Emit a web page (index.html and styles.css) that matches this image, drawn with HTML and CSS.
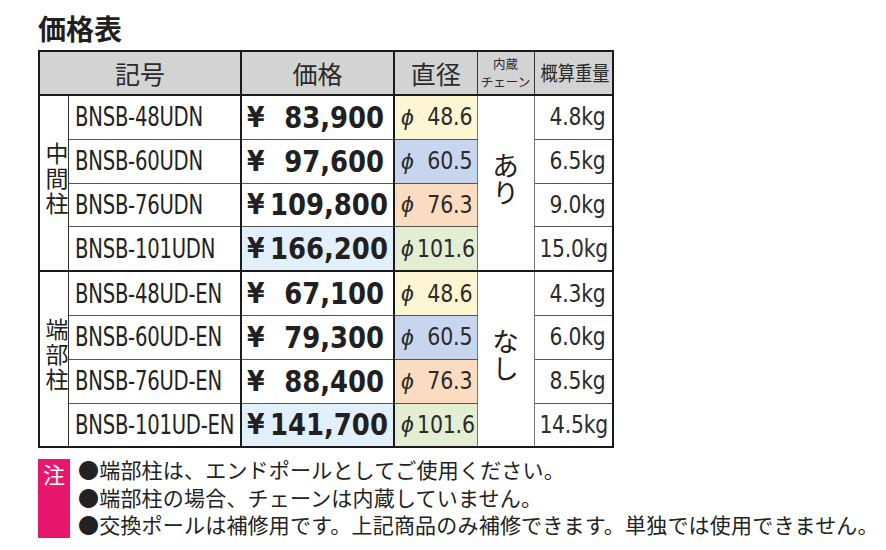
FILE: index.html
```html
<!DOCTYPE html>
<html lang="ja">
<head>
<meta charset="utf-8">
<title>価格表</title>
<link rel="stylesheet" href="styles.css">
</head>
<body>
<div class="page">
  <h1 class="title">価格表</h1>
  <table class="price-table">
    <colgroup>
      <col class="c-group"><col class="c-code"><col class="c-price"><col class="c-dia"><col class="c-chain"><col class="c-weight">
    </colgroup>
    <thead>
      <tr class="head">
        <th colspan="2" class="h-code">記号</th>
        <th class="h-price">価格</th>
        <th class="h-dia">直径</th>
        <th class="h-chain">内蔵<br>チェーン</th>
        <th class="h-weight"><span>概算重量</span></th>
      </tr>
    </thead>
    <tbody class="grp">
      <tr>
        <td rowspan="4" class="group"><span>中間柱</span></td>
        <td class="code"><span class="cond">BNSB-48UDN</span></td>
        <td class="price"><div class="pv"><span class="yen">¥</span><span class="pn">83,900</span></div></td>
        <td class="dia d48"><div class="dv"><i>ϕ</i><span class="cn">48.6</span></div></td>
        <td rowspan="4" class="chain"><span>あり</span></td>
        <td class="weight"><span class="condr">4.8kg</span></td>
      </tr>
      <tr>
        <td class="code"><span class="cond">BNSB-60UDN</span></td>
        <td class="price"><div class="pv"><span class="yen">¥</span><span class="pn">97,600</span></div></td>
        <td class="dia d60"><div class="dv"><i>ϕ</i><span class="cn">60.5</span></div></td>
        <td class="weight"><span class="condr">6.5kg</span></td>
      </tr>
      <tr>
        <td class="code"><span class="cond">BNSB-76UDN</span></td>
        <td class="price"><div class="pv"><span class="yen">¥</span><span class="pn">109,800</span></div></td>
        <td class="dia d76"><div class="dv"><i>ϕ</i><span class="cn">76.3</span></div></td>
        <td class="weight"><span class="condr">9.0kg</span></td>
      </tr>
      <tr>
        <td class="code"><span class="cond">BNSB-101UDN</span></td>
        <td class="price hl"><div class="pv"><span class="yen">¥</span><span class="pn">166,200</span></div></td>
        <td class="dia d101"><div class="dv"><i>ϕ</i><span class="cn">101.6</span></div></td>
        <td class="weight"><span class="condr">15.0kg</span></td>
      </tr>
    </tbody>
    <tbody class="grp">
      <tr>
        <td rowspan="4" class="group"><span>端部柱</span></td>
        <td class="code"><span class="cond">BNSB-48UD-EN</span></td>
        <td class="price"><div class="pv"><span class="yen">¥</span><span class="pn">67,100</span></div></td>
        <td class="dia d48"><div class="dv"><i>ϕ</i><span class="cn">48.6</span></div></td>
        <td rowspan="4" class="chain"><span>なし</span></td>
        <td class="weight"><span class="condr">4.3kg</span></td>
      </tr>
      <tr>
        <td class="code"><span class="cond">BNSB-60UD-EN</span></td>
        <td class="price"><div class="pv"><span class="yen">¥</span><span class="pn">79,300</span></div></td>
        <td class="dia d60"><div class="dv"><i>ϕ</i><span class="cn">60.5</span></div></td>
        <td class="weight"><span class="condr">6.0kg</span></td>
      </tr>
      <tr>
        <td class="code"><span class="cond">BNSB-76UD-EN</span></td>
        <td class="price"><div class="pv"><span class="yen">¥</span><span class="pn">88,400</span></div></td>
        <td class="dia d76"><div class="dv"><i>ϕ</i><span class="cn">76.3</span></div></td>
        <td class="weight"><span class="condr">8.5kg</span></td>
      </tr>
      <tr>
        <td class="code"><span class="cond">BNSB-101UD-EN</span></td>
        <td class="price hl"><div class="pv"><span class="yen">¥</span><span class="pn">141,700</span></div></td>
        <td class="dia d101"><div class="dv"><i>ϕ</i><span class="cn">101.6</span></div></td>
        <td class="weight"><span class="condr">14.5kg</span></td>
      </tr>
    </tbody>
  </table>
  <div class="notes">
    <div class="note-mark">注</div>
    <ul class="note-list">
      <li>●端部柱は、エンドポールとしてご使用ください。</li>
      <li>●端部柱の場合、チェーンは内蔵していません。</li>
      <li>●交換ポールは補修用です。上記商品のみ補修できます。単独では使用できません。</li>
    </ul>
  </div>
</div>
</body>
</html>
```

FILE: styles.css
```css
html, body {
  margin: 0;
  padding: 0;
  background: #fff;
}
body {
  font-family: "Noto Sans CJK JP", "Liberation Sans", sans-serif;
  color: #231f20;
}
.page {
  padding: 10px 0 0 38px;
}
.title {
  margin: 0;
  font-size: 28px;
  line-height: 36px;
  font-weight: 700;
  letter-spacing: 0;
  color: #1f1f1f;
}
.price-table {
  margin-top: 4px;
  border-collapse: collapse;
  border: 2.5px solid #1a1a1a;
  table-layout: fixed;
  width: 574px;
}
.c-group { width: 29px; }
.c-code { width: 173px; }
.c-price { width: 153px; }
.c-dia { width: 83px; }
.c-chain { width: 57px; }
.c-weight { width: 79px; }

.head th {
  background: #d3d3d3;
  height: 42px;
  padding: 0;
  font-weight: 400;
  font-size: 25px;
  color: #2a2a2a;
  border-bottom: 2px solid #1a1a1a;
  border-right: 1.5px solid #333;
  line-height: 1;
}
.head .h-code, .head .h-price {
  border-right: 2px solid #1a1a1a;
}
.head .h-chain {
  font-size: 12.5px;
  line-height: 18.5px;
}
.head .h-weight {
  font-size: 20px;
}
.h-weight span {
  display: inline-block;
  transform: scaleX(0.86);
  white-space: nowrap;
}

td {
  padding: 0;
  height: 42.8px;
  border-bottom: 1px solid #555;
  vertical-align: middle;
}
.grp + .grp tr:first-child td,
.grp + .grp td.group,
.grp + .grp td.chain {
  border-top: 2.5px solid #1a1a1a;
}
.group {
  border-right: 1px solid #333;
  text-align: center;
  font-size: 23px;
}
.group span {
  writing-mode: vertical-rl;
  letter-spacing: 2px;
  display: inline-block;
}
.code {
  font-family: "DejaVu Sans Condensed", "Liberation Sans", sans-serif;
  font-size: 26px;
  padding-left: 6px;
  border-right: 2px solid #1a1a1a;
  white-space: nowrap;
}
.cond {
  display: inline-block;
  transform: scaleX(0.84);
  transform-origin: left center;
  letter-spacing: -0.3px;
}
.price {
  border-right: 2px solid #1a1a1a;
  font-family: "DejaVu Sans Condensed", "Liberation Sans", sans-serif;
  font-weight: 700;
  font-size: 30px;
}
.price.hl { background: #e2f0fb; }
.pv {
  display: flex;
  justify-content: space-between;
  align-items: center;
  padding: 0 9px 0 5px;
}
.yen { font-size: 28px; }
.pn {
  display: inline-block;
  transform: scaleX(0.96);
  transform-origin: right center;
}
.dia {
  border-right: 1px solid #777;
  font-family: "DejaVu Sans Condensed", "Liberation Sans", sans-serif;
  font-size: 24px;
  color: #2b2b2b;
}
.dv {
  display: flex;
  justify-content: space-between;
  align-items: center;
  padding: 0 4px 0 6px;
}
.dv i {
  font-family: "Liberation Sans", "DejaVu Sans", sans-serif;
  font-style: italic;
  font-size: 23px;
}
.cn {
  display: inline-block;
  transform: scaleX(0.95);
  transform-origin: right center;
  letter-spacing: -0.2px;
}
.d48 { background: #fef6d2; }
.d60 { background: #c7d6ee; }
.d76 { background: #fcdcc1; }
.d101 { background: #e3eed3; }
.chain {
  border-right: 1px solid #777;
  text-align: center;
  font-size: 27px;
}
.chain span {
  writing-mode: vertical-rl;
  display: inline-block;
}
.weight {
  text-align: right;
  padding-right: 6px;
  font-family: "DejaVu Sans Condensed", "Liberation Sans", sans-serif;
  font-size: 24px;
  color: #2b2b2b;
}
.condr {
  display: inline-block;
  transform: scaleX(0.94);
  transform-origin: right center;
  letter-spacing: -0.2px;
}

.notes {
  display: flex;
  margin-top: 11px;
  gap: 8px;
}
.note-mark {
  width: 32px;
  height: 79px;
  background: #e6176d;
  color: #fff;
  font-size: 22px;
  line-height: 28px;
  text-align: center;
  flex: none;
}
.note-list {
  list-style: none;
  margin: -3px 0 0 0;
  padding: 0;
  font-size: 21px;
  line-height: 27.5px;
  letter-spacing: 0.2px;
  color: #222;
}
.note-list li { white-space: nowrap; }
```
